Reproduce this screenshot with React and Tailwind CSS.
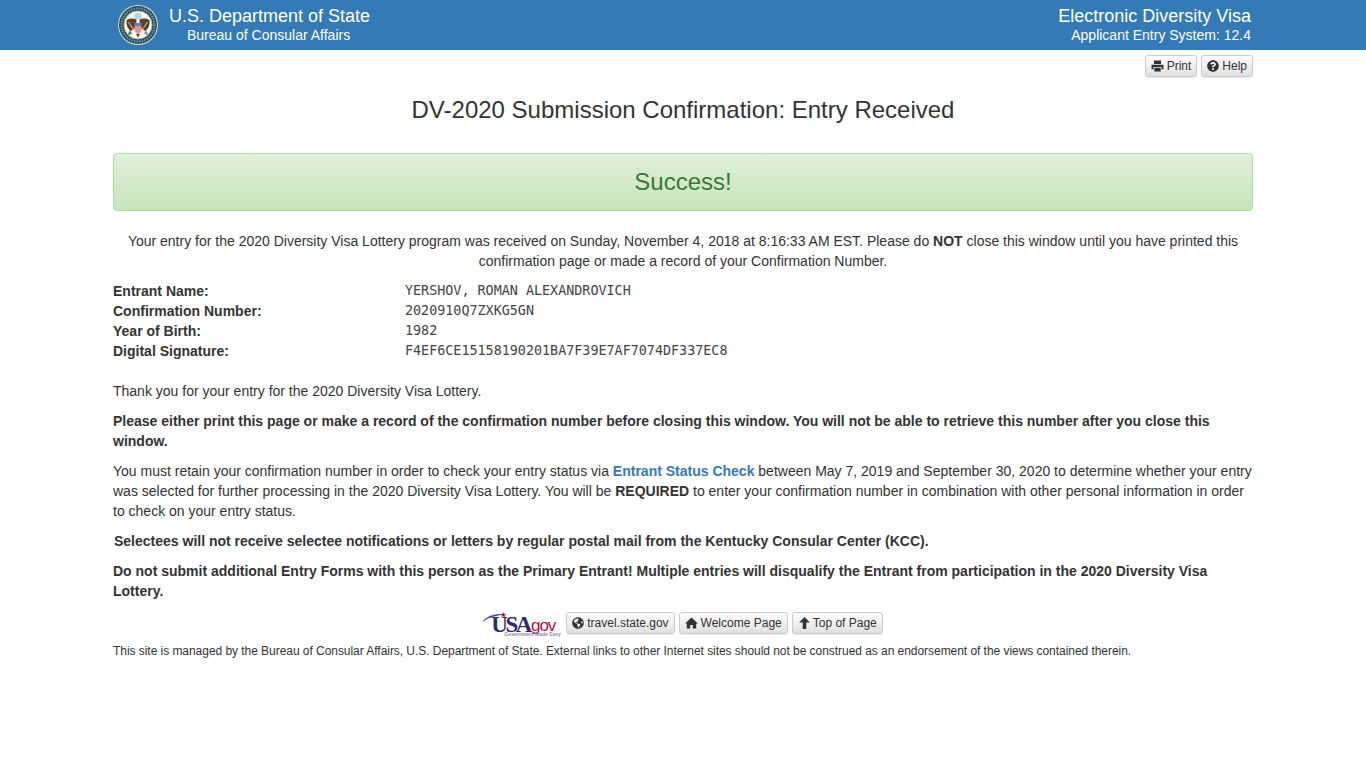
import React from "react";
import { FaQuestionCircle, FaGlobeAmericas } from "react-icons/fa";

function Seal() {
  return (
    <svg width="40" height="40" viewBox="0 0 40 40">
      <circle cx="20" cy="20" r="20" fill="#e3dcae" />
      <circle cx="20" cy="20" r="19" fill="#24526e" />
      <circle cx="20" cy="20" r="16.5" fill="none" stroke="#a8c0c8" strokeWidth="2" strokeDasharray="1.2 1.4" opacity="0.75" />
      <circle cx="20" cy="20" r="14" fill="#f7f8f3" stroke="#c9b765" strokeWidth="0.8" />
      <circle cx="20" cy="11.5" r="3.8" fill="#b4d5e6" />
      <path d="M19 15 C14 12.5 10 13.5 8.5 15.5 C8 19.5 9.5 24 13 26 L17 23 Z" fill="#5a4128" />
      <path d="M21 15 C26 12.5 30 13.5 31.5 15.5 C32 19.5 30.5 24 27 26 L23 23 Z" fill="#5a4128" />
      <path d="M10.5 17 L15 24 M29.5 17 L25 24" stroke="#c4b68c" strokeWidth="1.1" />
      <circle cx="20" cy="15.5" r="1.5" fill="#fff" />
      <rect x="16.5" y="18" width="7" height="3" fill="#6d7fa8" />
      <path d="M16.5 21 H23.5 V25 C23.5 27 21 28.5 20 29 C19 28.5 16.5 27 16.5 25 Z" fill="#e2929a" />
      <path d="M12 25 L9.5 30 L14 29 Z" fill="#3f7f4c" />
      <path d="M28 25 L30.5 30 L26 29 Z" fill="#8a8f8c" />
      <path d="M18 29 L20 32.5 L22 29 Z" fill="#5a4128" />
    </svg>
  );
}

function UsaGov() {
  return (
    <div className="relative w-[79px] h-[28px] shrink-0">
      <svg className="absolute left-0 top-0" width="26" height="12" viewBox="0 0 26 12">
        <path d="M0 9 C5 4 12 2 20 2.5 C13 3 6 5 0 9 Z" fill="#2e2a6e" stroke="#2e2a6e" strokeWidth="0.5" />
        <path d="M20 0 L21 1.8 L23 2 L21.6 3.3 L22 5.3 L20.2 4.3 L18.6 5.3 L19 3.3 L17.6 2 L19.6 1.8 Z" fill="#b3123f" />
      </svg>
      <span className="absolute left-[8px] top-[1px] text-[23px] leading-[24px] font-bold tracking-[-2.4px] text-[#2e2a6e] font-['Liberation_Serif',serif]">
        USA
      </span>
      <span className="absolute left-[44px] top-[4px] text-[17px] leading-[20px] tracking-[-1px] text-[#b3123f] font-['Liberation_Sans',sans-serif]">
        .gov
      </span>
      <span className="absolute left-[21px] top-[19px] text-[5px] leading-[6px] font-bold whitespace-nowrap text-[#8d8bb0] font-['Liberation_Sans',sans-serif]">
        Government Made Easy
      </span>
    </div>
  );
}

function PrintIcon() {
  return (
    <svg width="13" height="12" viewBox="0 0 13 12" fill="currentColor">
      <path d="M3 0.5 H10 V4 H3 Z" />
      <path d="M0.5 4.8 H12.5 V9.2 H10.5 V7 H2.5 V9.2 H0.5 Z" />
      <path d="M3.3 7.8 H9.7 V11.5 H3.3 Z" />
    </svg>
  );
}

function HomeIcon() {
  return (
    <svg width="13" height="12" viewBox="0 0 13 12" fill="currentColor">
      <path d="M6.5 0.5 L13 6.5 H11.2 V11.5 H7.8 V8 H5.2 V11.5 H1.8 V6.5 H0 Z" />
    </svg>
  );
}

function ArrowIcon() {
  return (
    <svg className="ml-px" width="11" height="12" viewBox="0 0 11 12" fill="currentColor">
      <path d="M5.5 0 L11 5.6 H7.3 V12 H3.7 V5.6 H0 Z" />
    </svg>
  );
}

function Btn({ icon, children }) {
  return (
    <a className="flex items-center gap-[3px] h-[22px] px-[5px] text-[12px] leading-[18px] text-[#333] border border-[#ccc] rounded-[3px] bg-gradient-to-b from-white to-[#e0e0e0] shadow-[0_1px_1px_rgba(0,0,0,0.08)]">
      {icon}
      {children}
    </a>
  );
}

function Row({ label, value }) {
  return (
    <div className="flex h-5">
      <div className="w-[292px] font-bold">{label}</div>
      <div className="text-[13.4px] text-[#444] font-['DejaVu_Sans_Mono',monospace]">{value}</div>
    </div>
  );
}

export default function App() {
  return (
    <div className="min-h-[768px] bg-white text-[14px] leading-5 text-[#333] font-['Liberation_Sans',Arial,sans-serif]">
      <header className="h-[50px] bg-[#337ab7] text-white">
        <div className="w-[1140px] mx-auto flex justify-between">
          <div className="flex">
            <div className="ml-[5px] mt-[5px]">
              <Seal />
            </div>
            <div className="ml-[11px]">
              <div className="text-[18px] leading-5 mt-[6px]">U.S. Department of State</div>
              <div className="ml-[18px] mt-[-1px] leading-5">Bureau of Consular Affairs</div>
            </div>
          </div>
          <div className="text-right pr-[2px]">
            <div className="text-[18px] leading-5 mt-[6px]">Electronic Diversity Visa</div>
            <div className="mt-[-1px] leading-5">Applicant Entry System: 12.4</div>
          </div>
        </div>
      </header>

      <main className="w-[1140px] mx-auto">
        <div className="flex justify-end gap-1 mt-[5px]">
          <Btn icon={<PrintIcon />}>Print</Btn>
          <Btn icon={<FaQuestionCircle className="text-[12px]" />}>Help</Btn>
        </div>

        <h1 className="mt-[20px] text-center text-[24px] leading-[26px] font-normal">
          DV-2020 Submission Confirmation: Entry Received
        </h1>

        <div className="mt-[30px] h-[58px] flex items-center justify-center rounded border border-[#b2dba1] bg-gradient-to-b from-[#dff0d8] to-[#c8e5bc] text-[24px] text-[#3c763d] shadow-[inset_0_1px_0_rgba(255,255,255,0.25)]">
          Success!
        </div>

        <p className="mt-5 text-center">
          Your entry for the 2020 Diversity Visa Lottery program was received on Sunday, November 4, 2018 at 8:16:33 AM EST. Please do <b>NOT</b> close this window until you have printed this confirmation page or made a record of your Confirmation Number.
        </p>

        <div className="mt-[10px]">
          <Row label="Entrant Name:" value="YERSHOV, ROMAN ALEXANDROVICH" />
          <Row label="Confirmation Number:" value="2020910Q7ZXKG5GN" />
          <Row label="Year of Birth:" value="1982" />
          <Row label="Digital Signature:" value="F4EF6CE15158190201BA7F39E7AF7074DF337EC8" />
        </div>

        <p className="mt-5">Thank you for your entry for the 2020 Diversity Visa Lottery.</p>
        <p className="mt-[10px] font-bold">
          Please either print this page or make a record of the confirmation number before closing this window. You will not be able to retrieve this number after you close this window.
        </p>
        <p className="mt-[10px]">
          You must retain your confirmation number in order to check your entry status via <a className="font-bold text-[#337ab7]">Entrant Status Check</a> between May 7, 2019 and September 30, 2020 to determine whether your entry was selected for further processing in the 2020 Diversity Visa Lottery. You will be <b>REQUIRED</b> to enter your confirmation number in combination with other personal information in order to check on your entry status.
        </p>
        <p className="mt-[10px] font-bold pl-px">
          Selectees will not receive selectee notifications or letters by regular postal mail from the Kentucky Consular Center (KCC).
        </p>
        <p className="mt-[10px] font-bold">
          Do not submit additional Entry Forms with this person as the Primary Entrant! Multiple entries will disqualify the Entrant from participation in the 2020 Diversity Visa Lottery.
        </p>

        <div className="mt-[11px] flex justify-center items-start gap-1">
          <UsaGov />
          <Btn icon={<FaGlobeAmericas className="text-[12px]" />}>travel.state.gov</Btn>
          <Btn icon={<HomeIcon />}>Welcome Page</Btn>
          <Btn icon={<ArrowIcon />}>Top of Page</Btn>
        </div>

        <p className="mt-[3px] text-[12px] leading-[17px] tracking-[-0.046px]">
          This site is managed by the Bureau of Consular Affairs, U.S. Department of State. External links to other Internet sites should not be construed as an endorsement of the views contained therein.
        </p>
      </main>
    </div>
  );
}
